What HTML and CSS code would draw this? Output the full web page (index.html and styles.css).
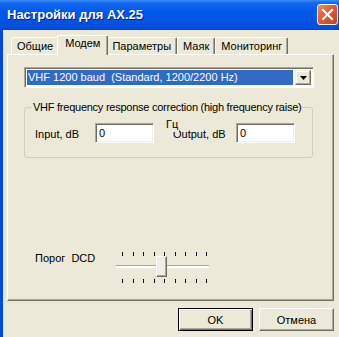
FILE: index.html
```html
<!DOCTYPE html>
<html lang="ru">
<head>
    <meta charset="UTF-8">
    <meta name="viewport" content="width=device-width, initial-scale=1.0">
    <title>Настройки для AX.25</title>
    <link rel="stylesheet" href="styles.css">
</head>
<body>
    <div class="window">
        <div class="titlebar">
            <span class="title">Настройки для AX.25</span>
            <span class="close">
                <svg width="13" height="13" viewBox="0 0 13 13">
                    <path d="M2 2 L11 11 M11 2 L2 11" stroke="#fff" stroke-width="2" stroke-linecap="square"/>
                </svg>
            </span>
        </div>
        <div class="frame">
            <div class="tabs">
                <div class="tab">Общие</div>
                <div class="tab active">Модем</div>
                <div class="tab">Параметры</div>
                <div class="tab">Маяк</div>
                <div class="tab">Мониторинг</div>
            </div>
            <div class="panel">
                <div class="combo">
                    <div class="combo-value">VHF 1200 baud&nbsp; (Standard, 1200/2200 Hz)</div>
                    <div class="combo-btn">
                        <svg width="7" height="4" viewBox="0 0 7 4"><polygon points="0,0 7,0 3.5,4" fill="#000"/></svg>
                    </div>
                </div>
                <fieldset class="group">
                    <legend>VHF frequency response correction (high frequency raise)</legend>
                    <div class="fields">
                        <label class="lbl">Input, dB</label>
                        <input class="edit" type="text" value="0">
                        <span></span>
                        <label class="lbl out">Output, dB<span class="hz">Гц</span></label>
                        <input class="edit" type="text" value="0">
                    </div>
                </fieldset>
                <div class="dcd">
                    <span class="dcd-label">Порог&nbsp; DCD</span>
                    <div class="slider">
                        <div class="ticks top"><i></i><i></i><i></i><i></i><i></i><i></i><i></i><i></i><i></i></div>
                        <div class="track"></div>
                        <div class="thumb"></div>
                        <div class="ticks bottom"><i></i><i></i><i></i><i></i><i></i><i></i><i></i><i></i><i></i></div>
                    </div>
                </div>
            </div>
            <div class="buttons">
                <button class="btn default">OK</button>
                <button class="btn">Отмена</button>
            </div>
        </div>
    </div>
</body>
</html>
```

FILE: styles.css
```css
* {
    box-sizing: border-box;
}
body {
    margin: 0;
    width: 339px;
    height: 337px;
    overflow: hidden;
    background: #ECE9D8;
    font-family: "Liberation Sans", Arial, sans-serif;
    font-size: 11px;
    color: #000;
}
.window {
    height: 337px;
    display: flex;
    flex-direction: column;
}
.titlebar {
    height: 30px;
    display: flex;
    align-items: center;
    justify-content: space-between;
    padding: 0 1px 1px 7px;
    background: linear-gradient(#3C8CF7 0, #1468F0 3px, #0058EA 12px, #0054E3 22px, #0A4CD8 28px, #0842C8 30px);
}
.title {
    color: #fff;
    font-weight: bold;
    font-size: 13px;
    text-shadow: 1px 1px #0A1E8C;
}
.close {
    width: 21px;
    height: 21px;
    display: flex;
    align-items: center;
    justify-content: center;
    border: 1px solid #fff;
    border-radius: 3px;
    background: linear-gradient(135deg, #F08A6A 0, #E05A32 45%, #C8401A 100%);
}
.frame {
    flex: 1;
    border-left: 3px solid #0A48D6;
    padding: 5px 5px 0 4px;
}
.tabs {
    display: flex;
    align-items: flex-end;
    padding-left: 4px;
    height: 20px;
    margin-bottom: -1px;
    position: relative;
    z-index: 1;
}
.tab {
    height: 17px;
    padding: 1px 5px 0 5px;
    margin-bottom: 1px;
    border: 1px solid;
    border-color: #fff #716F64 transparent #fff;
    border-bottom: none;
    border-radius: 2px 2px 0 0;
    box-shadow: inset -1px 0 #ACA899;
    background: #ECE9D8;
    line-height: 14px;
}
.tab.active {
    height: 20px;
    margin: 0 -2px 0;
    padding: 1px 7px 0;
    line-height: 13px;
    position: relative;
    z-index: 1;
}
.panel {
    height: 247px;
    border: 1px solid;
    border-color: #fff #716F64 #716F64 #fff;
    box-shadow: inset -1px -1px #ACA899;
    padding: 12px 0 0 16px;
    display: flex;
    flex-direction: column;
}
.combo {
    width: 290px;
    height: 21px;
    display: flex;
    border: 1px solid;
    border-color: #ACA899 #fff #fff #ACA899;
    box-shadow: inset 1px 1px #716F64;
    padding: 2px 2px 2px 2px;
    background: #fff;
}
.combo-value {
    flex: 1;
    background: #316AC5;
    color: #fff;
    line-height: 15px;
    padding-left: 1px;
    white-space: nowrap;
    margin-right: 2px;
}
.combo-btn {
    width: 16px;
    display: flex;
    align-items: center;
    justify-content: center;
    background: #ECE9D8;
    border: 1px solid;
    border-color: #F1EFE2 #716F64 #716F64 #F1EFE2;
    box-shadow: inset -1px -1px #ACA899, inset 1px 1px #fff;
}
.group {
    width: 285px;
    margin: 13px 0 0;
    padding: 9px 10px 14px 10px;
    border: 1px solid #D0D0BF;
    border-radius: 3px;
}
.group legend {
    padding: 0 1px;
    margin-left: -3px;
    line-height: 13px;
    white-space: nowrap;
    letter-spacing: -0.25px;
}
.fields {
    display: grid;
    grid-template-columns: 60px 59px 19px 63px 59px;
    align-items: center;
}
.lbl {
    padding-top: 2px;
    position: relative;
}
.hz {
    position: absolute;
    left: -8px;
    top: -7px;
    height: 13px;
    padding: 0 1px;
    background: #ECE9D8;
    line-height: 11px;
}
.edit {
    width: 59px;
    height: 20px;
    margin: 0;
    border: 1px solid;
    border-color: #ACA899 #fff #fff #ACA899;
    box-shadow: inset 1px 1px #716F64, inset -1px -1px #F1EFE2;
    padding: 0 0 0 3px;
    font: inherit;
    background: #fff;
    outline: none;
}
.dcd {
    margin-top: auto;
    margin-bottom: 15px;
    display: flex;
    align-items: flex-start;
    padding-left: 11px;
}
.dcd-label {
    width: 81px;
    margin-top: 2px;
}
.slider {
    width: 93px;
    height: 35px;
    position: relative;
}
.ticks {
    position: absolute;
    left: 6px;
    right: 2px;
    height: 4px;
    display: flex;
    justify-content: space-between;
}
.ticks.top {
    top: 2px;
}
.ticks.bottom {
    top: 29px;
}
.ticks i {
    width: 1px;
    height: 4px;
    background: #000;
}
.track {
    position: absolute;
    left: 0;
    right: 0;
    top: 15px;
    height: 3px;
    border-top: 1px solid #ACA899;
    background: #fff;
    box-shadow: 0 1px #F1EFE2;
}
.thumb {
    position: absolute;
    left: 40px;
    top: 6px;
    width: 11px;
    height: 21px;
    background: #F0EEE6;
    border: 1px solid;
    border-color: #fff #716F64 #716F64 #fff;
    box-shadow: inset -1px -1px #ACA899;
}
.buttons {
    display: flex;
    justify-content: flex-end;
    gap: 6px;
    margin-top: 7px;
}
.btn {
    width: 75px;
    height: 23px;
    font: inherit;
    color: #000;
    background: #ECE9D8;
    border: 1px solid;
    border-color: #fff #716F64 #716F64 #fff;
    box-shadow: inset -1px -1px #ACA899;
    padding: 0;
}
.btn.default {
    border-color: #000;
    box-shadow: inset 1px 1px #fff, inset -1px -1px #716F64, inset -2px -2px #ACA899;
}
```
